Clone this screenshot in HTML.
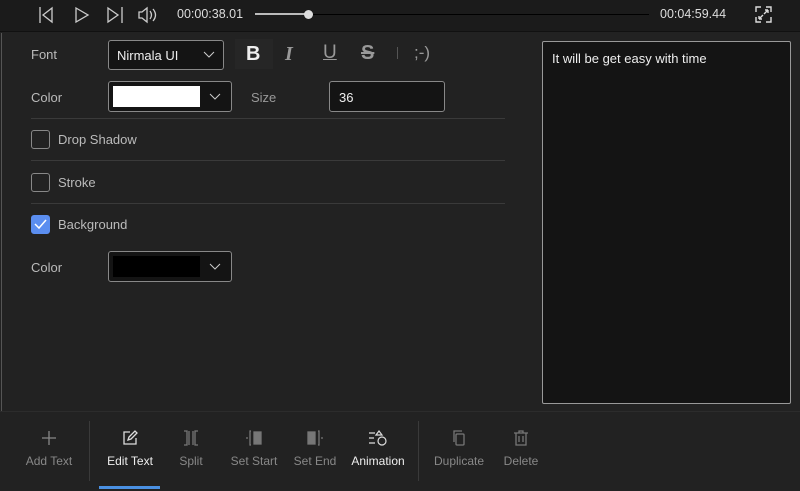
<!DOCTYPE html><html><head><style>
*{margin:0;padding:0;box-sizing:border-box}
body{width:800px;height:491px;background:#222;font-family:"Liberation Sans",sans-serif;color:#ccc;position:relative;overflow:hidden;font-size:13px}
.a{position:absolute}
.top{left:0;top:0;width:800px;height:32px;background:#1b1b1b;border-bottom:1px solid #111}
.lbl{color:#bbb;font-size:13px}
.box{border:1px solid #888;border-radius:3px;background:#141414}
.hr{height:1px;background:#3a3a3a;left:31px;width:474px}
.cb{width:19px;height:19px;border:1.5px solid #888;border-radius:3px}
.tb{text-align:center;font-size:12px;color:#888;width:70px}
.tb svg{display:block;margin:0 auto 8px}
</style></head><body>
<div class="a top"></div>
<svg class="a" style="left:38px;top:5px" width="125" height="20" fill="none" stroke="#ccc" stroke-width="1.3">
<path d="M2 2v16M14 3L5 10l9 7z"/><path d="M38 3l12 7-12 7z"/><path d="M70 3l10 7-10 7zM84 2v16"/>
<path d="M101 7h3l5-4v14l-5-4h-3zM112 6q3 4 0 8M115 4q5 6 0 12"/></svg>
<div class="a" style="left:177px;top:7px;color:#ddd;font-size:12.5px">00:00:38.01</div>
<div class="a" style="left:255px;top:13px;width:54px;height:2px;background:#bbb"></div>
<div class="a" style="left:309px;top:14px;width:340px;height:1px;background:#000"></div>
<div class="a" style="left:304px;top:10px;width:9px;height:9px;border-radius:50%;background:#ddd"></div>
<div class="a" style="left:660px;top:7px;color:#ddd;font-size:12.5px">00:04:59.44</div>
<svg class="a" style="left:755px;top:6px" width="17" height="17" fill="none" stroke="#ddd" stroke-width="1.4"><path d="M1 6V1h5M11 1h5v5M16 11v5h-5M6 16H1v-5M4 13l4-4M13 4l-4 4M4 13h3M4 13v-3M13 4h-3M13 4v3"/></svg>
<div class="a" style="left:1px;top:33px;width:1px;height:378px;background:#555"></div>
<div class="a lbl" style="left:31px;top:47px">Font</div>
<div class="a box" style="left:108px;top:40px;width:116px;height:30px;background:#141414"><span class="a" style="left:8px;top:7px;color:#eee">Nirmala UI</span><svg class="a" style="left:94px;top:10px" width="12" height="8" fill="none" stroke="#ccc"><path d="M1 1l5 5 5-5"/></svg></div>
<div class="a" style="left:235px;top:39px;width:38px;height:30px;background:#262626"></div>
<div class="a" style="left:246px;top:43px;font-size:20px;font-weight:bold;color:#eee">B</div>
<div class="a" style="left:285px;top:43px;font-size:20px;font-style:italic;font-weight:bold;color:#999;font-family:'Liberation Serif',serif">I</div>
<div class="a" style="left:323px;top:42px;font-size:19px;color:#999;text-decoration:underline">U</div>
<div class="a" style="left:361px;top:42px;font-size:20px;font-weight:bold;color:#999;text-decoration:line-through">S</div>
<div class="a" style="left:397px;top:47px;width:1px;height:12px;background:#555"></div>
<div class="a" style="left:414px;top:43px;font-size:17px;color:#999">;-)</div>
<div class="a lbl" style="left:31px;top:90px">Color</div>
<div class="a box" style="left:108px;top:81px;width:124px;height:31px"><div class="a" style="left:4px;top:4px;width:87px;height:21px;background:#fff"></div><svg class="a" style="left:100px;top:11px" width="12" height="8" fill="none" stroke="#ccc"><path d="M1 1l5 5 5-5"/></svg></div>
<div class="a lbl" style="left:251px;top:90px;color:#999">Size</div>
<div class="a box" style="left:329px;top:81px;width:116px;height:31px"><span class="a" style="left:9px;top:8px;color:#eee">36</span></div>
<div class="a hr" style="top:118px"></div>
<div class="a cb" style="left:31px;top:130px"></div><div class="a lbl" style="left:58px;top:132px">Drop Shadow</div>
<div class="a hr" style="top:160px"></div>
<div class="a cb" style="left:31px;top:173px"></div><div class="a lbl" style="left:58px;top:175px">Stroke</div>
<div class="a hr" style="top:203px"></div>
<div class="a cb" style="left:31px;top:215px;background:#5b8ef0;border-color:#5b8ef0"><svg class="a" style="left:2px;top:3px" width="13" height="11" fill="none" stroke="#fff" stroke-width="1.5"><path d="M1 5l4 4 7-8"/></svg></div><div class="a lbl" style="left:58px;top:217px">Background</div>
<div class="a lbl" style="left:31px;top:260px">Color</div>
<div class="a box" style="left:108px;top:251px;width:124px;height:31px"><div class="a" style="left:4px;top:4px;width:87px;height:21px;background:#000"></div><svg class="a" style="left:100px;top:11px" width="12" height="8" fill="none" stroke="#ccc"><path d="M1 1l5 5 5-5"/></svg></div>
<div class="a" style="left:542px;top:41px;width:249px;height:363px;border:1px solid #999;border-radius:2px;background:#141414"><span class="a" style="left:9px;top:9px;color:#eee">It will be get easy with time</span></div>
<div class="a" style="left:0;top:411px;width:800px;height:1px;background:#2c2c2c"></div>
<div class="a tb" style="left:14px;top:430px"><svg width="16" height="16" stroke="#888" stroke-width="1.3"><path d="M8 1v14M1 8h14"/></svg>Add Text</div>
<div class="a" style="left:89px;top:421px;width:1px;height:60px;background:#3a3a3a"></div>
<div class="a tb" style="left:95px;top:430px;color:#eee"><svg width="16" height="16" fill="none" stroke="#ddd" stroke-width="1.3"><path d="M8 2H2v12h12V8M6 10l1-3 6-6 2 2-6 6z"/></svg>Edit Text</div>
<div class="a" style="left:99px;top:486px;width:61px;height:3px;background:#4a90e2"></div>
<div class="a tb" style="left:156px;top:430px"><svg width="18" height="16" fill="none" stroke="#777" stroke-width="1.3"><path d="M2 1h3v14H2M16 1h-3v14h3M7 1v14M11 1v14"/></svg>Split</div>
<div class="a tb" style="left:219px;top:430px"><svg width="18" height="16" fill="none" stroke="#777" stroke-width="1.3"><path d="M1 8h2M6 1H5v14h1"/><rect x="9" y="2" width="7" height="12" fill="#777"/></svg>Set Start</div>
<div class="a tb" style="left:280px;top:430px"><svg width="18" height="16" fill="none" stroke="#777" stroke-width="1.3"><rect x="2" y="2" width="7" height="12" fill="#777"/><path d="M12 1h1v14h-1M15 8h2"/></svg>Set End</div>
<div class="a tb" style="left:343px;top:430px;color:#eee"><svg width="20" height="16" fill="none" stroke="#ddd" stroke-width="1.2"><path d="M1 3h6M1 8h5M1 13h6M8 5l3-4 3 4z"/><circle cx="14" cy="11" r="4"/></svg>Animation</div>
<div class="a" style="left:418px;top:421px;width:1px;height:60px;background:#3a3a3a"></div>
<div class="a tb" style="left:424px;top:430px"><svg width="16" height="16" fill="none" stroke="#777" stroke-width="1.3"><path d="M3 12V1h8"/><rect x="5" y="4" width="8" height="11" rx="1"/></svg>Duplicate</div>
<div class="a tb" style="left:486px;top:430px"><svg width="16" height="16" fill="none" stroke="#777" stroke-width="1.3"><path d="M1 3h14M6 3V1h4v2M3 3v12h10V3M6 6v6M10 6v6"/></svg>Delete</div>
</body></html>
